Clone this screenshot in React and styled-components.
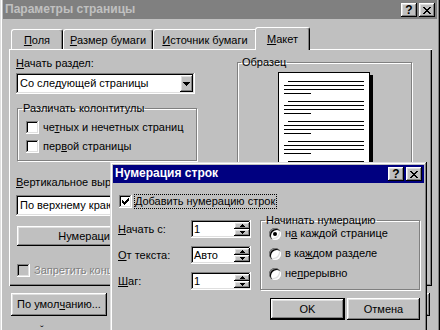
import React from 'react';
import styled, { createGlobalStyle, css } from 'styled-components';

const GlobalStyle = createGlobalStyle`
  html, body {
    margin: 0;
    padding: 0;
    background: #c0c0c0;
    overflow: hidden;
  }
  body {
    font-family: "Liberation Sans", Arial, sans-serif;
    font-size: 11px;
    line-height: 13px;
    color: #000;
  }
`;

// classic win95 bevels
const raised = css`
  box-shadow: inset -1px -1px #000, inset 1px 1px #fff, inset -2px -2px #808080,
    inset 2px 2px #dfdfdf;
`;
const windowBevel = css`
  box-shadow: inset -1px -1px #000, inset 1px 1px #dfdfdf, inset -2px -2px #808080,
    inset 2px 2px #fff;
`;
const sunken = css`
  box-shadow: inset -1px -1px #fff, inset 1px 1px #808080, inset -2px -2px #dfdfdf,
    inset 2px 2px #000;
`;

const Stage = styled.div`
  position: relative;
  width: 440px;
  height: 330px;
  overflow: hidden;
  background: #c0c0c0;
`;

const Window = styled.div`
  box-sizing: border-box;
  width: 440px;
  height: 380px;
  margin-top: -4px;
  padding: 3px;
  background: #c0c0c0;
  display: flex;
  flex-direction: column;
  ${windowBevel}
`;

const InnerWindow = styled(Window)`
  position: absolute;
  left: 110px;
  top: 162px;
  width: 317px;
  height: 190px;
  margin: 0;
  z-index: 5;
`;

const TitleBar = styled.div`
  display: flex;
  align-items: flex-end;
  justify-content: space-between;
  flex-shrink: 0;
  height: ${(p) => p.$h}px;
  box-sizing: border-box;
  padding: 0 2px 2px 2px;
  background: ${(p) => (p.$active ? '#000080' : '#808080')};
  color: ${(p) => (p.$active ? '#fff' : '#c0c0c0')};
  font-weight: bold;
  font-size: 12px;
`;

const TitleText = styled.span`
  line-height: 14px;
  padding-bottom: 1px;
`;

const TitleButtons = styled.div`
  display: flex;
  gap: 2px;
`;

const TitleButton = styled.div`
  box-sizing: border-box;
  width: 16px;
  height: 14px;
  background: #c0c0c0;
  color: #000;
  display: flex;
  align-items: center;
  justify-content: center;
  font-size: 12px;
  font-weight: bold;
  ${raised}
`;

const TabRow = styled.div`
  position: relative;
  z-index: 2;
  display: flex;
  align-items: flex-end;
  flex-shrink: 0;
  height: 30px;
  padding-left: 8px;
`;

const Tab = styled.div`
  box-sizing: border-box;
  width: ${(p) => p.$w + (p.$active ? 4 : 0)}px;
  height: ${(p) => (p.$active ? 23 : 20)}px;
  margin: 0 ${(p) => (p.$active ? -2 : 0)}px ${(p) => (p.$active ? -1 : 0)}px;
  position: relative;
  z-index: ${(p) => (p.$active ? 2 : 1)};
  padding-top: ${(p) => (p.$active ? 5 : 4)}px;
  background: #c0c0c0;
  border-top: 1px solid #fff;
  border-left: 1px solid #fff;
  border-right: 1px solid #000;
  border-radius: 3px 3px 0 0;
  box-shadow: inset -1px 0 #808080;
  text-align: center;
`;

const Panel = styled.div`
  position: relative;
  z-index: 1;
  box-sizing: border-box;
  flex-shrink: 0;
  height: 237px;
  margin: 0 5px 0 6px;
  padding: 8px 0 0 7px;
  display: grid;
  grid-template-columns: 181px 175px;
  column-gap: 40px;
  align-items: start;
  box-shadow: inset 1px 1px #fff, inset -1px -1px #000, inset -2px -2px #808080;
`;

const Column = styled.div`
  display: flex;
  flex-direction: column;
  align-items: flex-start;
`;

const Label = styled.div`
  margin-top: ${(p) => p.$mt || 0}px;
  white-space: nowrap;
`;

const Key = styled.span`
  text-decoration: underline;
  text-underline-offset: 1px;
`;

const Field = styled.div`
  position: relative;
  box-sizing: border-box;
  width: ${(p) => p.$w}px;
  height: ${(p) => p.$h}px;
  margin-top: ${(p) => p.$mt || 0}px;
  padding: 0 2px 0 ${(p) => p.$pl ?? 4}px;
  background: #fff;
  display: flex;
  align-items: center;
  justify-content: space-between;
  white-space: nowrap;
  ${sunken}
`;

const DropButton = styled.div`
  box-sizing: border-box;
  width: 13px;
  height: 17px;
  background: #c0c0c0;
  display: flex;
  align-items: center;
  justify-content: center;
  flex-shrink: 0;
  ${raised}
`;

const Spinner = styled.div`
  display: flex;
  flex-direction: column;
  flex-shrink: 0;
  margin-right: -1px;
`;

const SpinButton = styled.div`
  box-sizing: border-box;
  width: 16px;
  height: 7px;
  background: #c0c0c0;
  display: flex;
  align-items: center;
  justify-content: center;
  ${raised}
`;

const Group = styled.fieldset`
  box-sizing: border-box;
  width: ${(p) => p.$w}px;
  height: ${(p) => p.$h}px;
  margin: ${(p) => p.$mt || 0}px 0 0 ${(p) => p.$ml || 0}px;
  padding: 0;
  border: 1px solid #808080;
  box-shadow: inset 1px 1px #fff, 1px 1px #fff;
  min-width: 0;
`;

const Legend = styled.legend`
  margin-left: ${(p) => p.$ml || 4}px;
  padding: 0 1px;
  line-height: 13px;
`;

const CheckRow = styled.div`
  display: flex;
  align-items: center;
  gap: ${(p) => p.$gap ?? 4}px;
  height: 13px;
  margin: ${(p) => p.$mt || 0}px 0 0 ${(p) => p.$ml || 0}px;
  white-space: nowrap;
  color: ${(p) => (p.$disabled ? '#808080' : '#000')};
  text-shadow: ${(p) => (p.$disabled ? '1px 1px #fff' : 'none')};
`;

const Box = styled.div`
  box-sizing: border-box;
  width: 13px;
  height: 13px;
  flex-shrink: 0;
  background: ${(p) => (p.$disabled ? '#c0c0c0' : '#fff')};
  display: flex;
  align-items: center;
  justify-content: center;
  ${sunken}
`;

const Radio = styled.div`
  position: relative;
  box-sizing: border-box;
  width: 12px;
  height: 12px;
  flex-shrink: 0;
  border-radius: 50%;
  background: #fff;
  box-shadow: inset 1px 1px #808080, inset 2px 2px #000, inset -1px -1px #fff,
    inset -2px -2px #dfdfdf;

  &::after {
    content: '';
    display: ${(p) => (p.$on ? 'block' : 'none')};
    position: absolute;
    left: 4px;
    top: 4px;
    width: 4px;
    height: 4px;
    border-radius: 50%;
    background: #000;
  }
`;

const Button = styled.div`
  box-sizing: border-box;
  width: ${(p) => p.$w}px;
  height: ${(p) => p.$h || 23}px;
  margin: ${(p) => p.$mt || 0}px 0 0 ${(p) => p.$ml || 0}px;
  background: #c0c0c0;
  display: flex;
  align-items: center;
  justify-content: center;
  white-space: nowrap;
  ${raised}
  ${(p) =>
    p.$default &&
    css`
      box-shadow: inset 0 0 0 1px #000, inset -2px -2px #000, inset 2px 2px #fff,
        inset -3px -3px #808080, inset 3px 3px #dfdfdf;
    `}
`;

const BottomRow = styled.div`
  display: flex;
  align-items: center;
  flex-shrink: 0;
  margin-top: 7px;
  padding: 0 7px 0 8px;
`;

const RightButtons = styled.div`
  display: flex;
  gap: 6px;
  margin-left: auto;
`;

const Page = styled.div`
  box-sizing: border-box;
  width: 92px;
  height: 160px;
  margin: 3px 0 0 40px;
  padding: 8px 0 0 5px;
  background: #fff;
  border: 1px solid #000;
  box-shadow: 3px 3px 0 #000;
  display: flex;
  flex-direction: column;
  gap: 7px;
`;

const Paragraph = styled.div`
  display: flex;
  flex-direction: column;
  gap: 3px;
`;

const Line = styled.div`
  height: 1px;
  background: #000;
  width: ${(p) => p.$w}px;
  margin-left: ${(p) => p.$ml || 0}px;
`;

const DialogBody = styled.div`
  display: flex;
  flex-direction: column;
  padding: 0 4px 0 5px;
`;

const FocusLabel = styled.div`
  box-sizing: border-box;
  height: 15px;
  padding: 0 2px 0 1px;
  outline: 1px dotted #000;
  outline-offset: -1px;
  display: flex;
  align-items: center;
  white-space: nowrap;
`;

const FormArea = styled.div`
  display: flex;
  align-items: flex-start;
  margin-top: 6px;
`;

const FieldGrid = styled.div`
  display: grid;
  grid-template-columns: 73px 60px;
  grid-auto-rows: 18px;
  row-gap: 8px;
  align-items: center;
  margin-top: 6px;
`;

const RadioList = styled.div`
  display: flex;
  flex-direction: column;
  gap: 7px;
  padding: 0 0 0 8px;
`;

const RadioRow = styled.div`
  display: flex;
  align-items: center;
  gap: 4px;
  height: 13px;
  white-space: nowrap;
`;

const DialogButtons = styled.div`
  display: flex;
  justify-content: flex-end;
  gap: 2px;
  margin-top: 8px;
`;

const Crumb = styled.div`
  flex-shrink: 0;
  margin: 8px 0 0 37px;
  font-size: 11px;
  line-height: 13px;
`;

const Pixels = ({ runs, w, h }) => (
  <svg width={w} height={h} viewBox={`0 0 ${w} ${h}`} shapeRendering="crispEdges">
    {runs.map(([x, y, len], i) => (
      <rect key={i} x={x} y={y} width={len} height={1} fill="currentColor" />
    ))}
  </svg>
);

const closeRuns = [
  [0, 0, 2], [6, 0, 2],
  [1, 1, 2], [5, 1, 2],
  [2, 2, 4],
  [3, 3, 2],
  [2, 4, 4],
  [1, 5, 2], [5, 5, 2],
  [0, 6, 2], [6, 6, 2],
];
const checkRuns = [
  [6, 0, 1],
  [5, 1, 2],
  [0, 2, 1], [4, 2, 3],
  [0, 3, 2], [3, 3, 3],
  [0, 4, 5],
  [1, 5, 3],
  [2, 6, 1],
];
const downRuns = [[0, 0, 7], [1, 1, 5], [2, 2, 3], [3, 3, 1]];
const smallUp = [[2, 0, 1], [1, 1, 3], [0, 2, 5]];
const smallDown = [[0, 0, 5], [1, 1, 3], [2, 2, 1]];

const CloseGlyph = () => <Pixels runs={closeRuns} w={8} h={7} />;
const CheckGlyph = () => <Pixels runs={checkRuns} w={7} h={7} />;

const Combo = ({ children, w, mt }) => (
  <Field $w={w} $h={21} $mt={mt}>
    <span>{children}</span>
    <DropButton>
      <Pixels runs={downRuns} w={7} h={4} />
    </DropButton>
  </Field>
);

const SpinField = ({ value }) => (
  <Field $w={60} $h={18} $pl={3}>
    <span>{value}</span>
    <Spinner>
      <SpinButton>
        <Pixels runs={smallUp} w={5} h={3} />
      </SpinButton>
      <SpinButton>
        <Pixels runs={smallDown} w={5} h={3} />
      </SpinButton>
    </Spinner>
  </Field>
);

const Check = ({ checked, disabled, children, ml, mt }) => (
  <CheckRow $ml={ml} $mt={mt} $disabled={disabled}>
    <Box $disabled={disabled}>{checked && <CheckGlyph />}</Box>
    <span>{children}</span>
  </CheckRow>
);

const tabs = [
  { w: 52, label: <><Key>П</Key>оля</> },
  { w: 90, label: <><Key>Р</Key>азмер бумаги</> },
  { w: 104, label: <><Key>И</Key>сточник бумаги</> },
  { w: 51, label: <><Key>М</Key>акет</>, active: true },
];

const paragraphs = [0, 1, 2, 3, 4, 5, 6];

export default function App() {
  return (
    <Stage>
      <GlobalStyle />
      <Window>
        <TitleBar $h={20}>
          <TitleText>Параметры страницы</TitleText>
          <TitleButtons>
            <TitleButton>?</TitleButton>
            <TitleButton>
              <CloseGlyph />
            </TitleButton>
          </TitleButtons>
        </TitleBar>

        <TabRow>
          {tabs.map((t, i) => (
            <Tab key={i} $w={t.w} $active={t.active}>
              {t.label}
            </Tab>
          ))}
        </TabRow>

        <Panel>
          <Column>
            <Label>
              <Key>Н</Key>ачать раздел:
            </Label>
            <Combo w={179} mt={3}>
              Со следующей страницы
            </Combo>
            <Group $w={180} $h={59} $mt={8} $ml={1}>
              <Legend $ml={4}>Различать колонтитулы</Legend>
              <Check ml={8} mt={6}>
                че<Key>т</Key>ных и нечетных страниц
              </Check>
              <Check ml={8} mt={6}>
                пер<Key>в</Key>ой страницы
              </Check>
            </Group>
            <Label $mt={15}>
              <Key>В</Key>ертикальное выравнивание:
            </Label>
            <Combo w={179} mt={6}>
              По верхнему краю
            </Combo>
            <Button $w={180} $h={20} $mt={10} $ml={1}>
              Нумерация строк...
            </Button>
            <Check ml={1} mt={18} disabled>
              Запретить концевые сноски
            </Check>
          </Column>

          <Column>
            <Group $w={175} $h={190} $mt={-1}>
              <Legend $ml={3}>Образец</Legend>
              <Page>
                {paragraphs.map((p) => (
                  <Paragraph key={p}>
                    <Line $w={76} $ml={4} />
                    <Line $w={80} />
                    <Line $w={80} />
                    <Line $w={27} />
                  </Paragraph>
                ))}
              </Page>
            </Group>
          </Column>
        </Panel>

        <BottomRow>
          <Button $w={96}>
            По умол<Key>ч</Key>анию...
          </Button>
          <RightButtons>
            <Button $w={75} $default>
              OK
            </Button>
            <Button $w={75}>Отмена</Button>
          </RightButtons>
        </BottomRow>
        <Crumb>ˇ</Crumb>
      </Window>

      <InnerWindow>
        <TitleBar $h={18} $active>
          <TitleText>Нумерация строк</TitleText>
          <TitleButtons>
            <TitleButton>?</TitleButton>
            <TitleButton>
              <CloseGlyph />
            </TitleButton>
          </TitleButtons>
        </TitleBar>
        <DialogBody>
          <CheckRow $mt={12} $ml={1} $gap={2}>
            <Box>
              <CheckGlyph />
            </Box>
            <FocusLabel>
              <Key>Д</Key>обавить нумерацию строк
            </FocusLabel>
          </CheckRow>

          <FormArea>
            <FieldGrid>
              <Label>
                <Key>Н</Key>ачать с:
              </Label>
              <SpinField value="1" />
              <Label>
                <Key>О</Key>т текста:
              </Label>
              <SpinField value="Авто" />
              <Label>
                <Key>Ш</Key>аг:
              </Label>
              <SpinField value="1" />
            </FieldGrid>
            <Group $w={160} $h={76} $ml={9}>
              <Legend $ml={4}>Начинать нумерацию</Legend>
              <RadioList>
                <RadioRow>
                  <Radio $on />
                  <span>
                    н<Key>а</Key> каждой странице
                  </span>
                </RadioRow>
                <RadioRow>
                  <Radio />
                  <span>
                    в ка<Key>ж</Key>дом разделе
                  </span>
                </RadioRow>
                <RadioRow>
                  <Radio />
                  <span>
                    не<Key>п</Key>рерывно
                  </span>
                </RadioRow>
              </RadioList>
            </Group>
          </FormArea>

          <DialogButtons>
            <Button $w={75} $h={22} $default>
              OK
            </Button>
            <Button $w={73} $h={22}>
              Отмена
            </Button>
          </DialogButtons>
        </DialogBody>
      </InnerWindow>
    </Stage>
  );
}
